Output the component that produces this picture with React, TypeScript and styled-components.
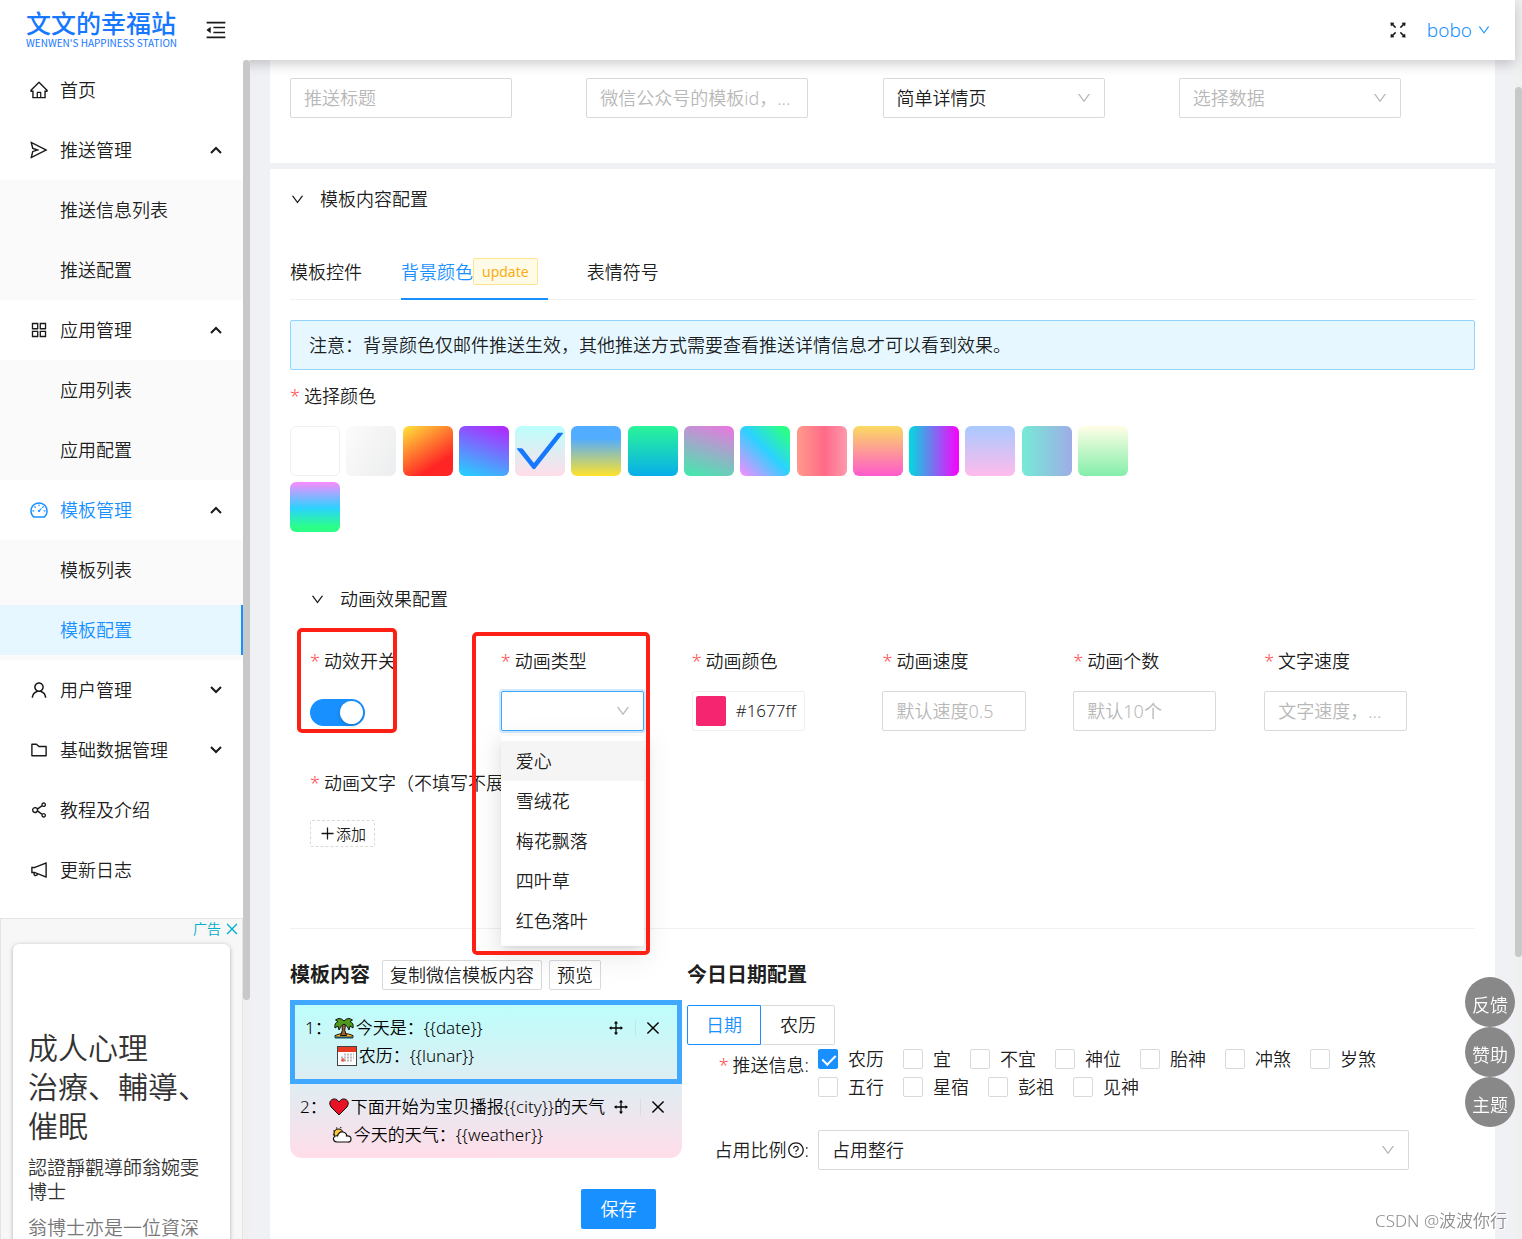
import React, { useState } from "react";
import styled, { createGlobalStyle, css } from "styled-components";
import {
  AiOutlineAppstore,
  AiOutlineCheck,
  AiOutlineClose,
  AiOutlineDashboard,
  AiOutlineDown,
  AiOutlineDrag,
  AiOutlineFolder,
  AiOutlineFullscreen,
  AiOutlineHome,
  AiOutlineMenuFold,
  AiOutlineNotification,
  AiOutlinePlus,
  AiOutlineQuestionCircle,
  AiOutlineSend,
  AiOutlineShareAlt,
  AiOutlineUser,
} from "react-icons/ai";

const blue = "#1890ff";
const textColor = "rgba(0, 0, 0, 0.9)";
const muted = "#b8b8b8";
const line = "#d9d9d9";

const GlobalStyle = createGlobalStyle`
  * { box-sizing: border-box; }
  body {
    margin: 0;
    color: ${textColor};
    font-family: "Noto Sans", "Noto Sans CJK SC", sans-serif;
    font-size: 18px;
    font-weight: 350;
    line-height: 28px;
  }
  button, input, select { font: inherit; color: inherit; }
  button { cursor: pointer; }
  ul { list-style: none; margin: 0; padding: 0; }
  svg { display: block; flex: none; }
`;

/* ---------- shell ---------- */

const Page = styled.div`
  display: flex;
  height: 100vh;
  overflow: hidden;
`;

const Frame = styled.div`
  flex: 1;
  min-width: 0;
  display: flex;
  flex-direction: column;
`;

const Body = styled.div`
  flex: 1;
  min-height: 0;
  display: flex;
`;

const Rail = styled.div<{ $rows: string }>`
  flex: none;
  width: 7px;
  display: grid;
  grid-template-rows: ${(p) => p.$rows};
  background: #f0f0f0;
`;

const Thumb = styled.div`
  grid-row: 2;
  border-radius: 4px;
  background: #c8c8c8;
`;

/* ---------- header ---------- */

const Header = styled.header`
  flex: none;
  height: 60px;
  position: relative;
  z-index: 2;
  display: flex;
  align-items: center;
  padding: 0 24px 0 26px;
  background: #fff;
  box-shadow: 0 4px 12px rgba(0, 0, 0, 0.2);
`;

const Logo = styled.a`
  display: flex;
  flex-direction: column;
  width: 150px;
  margin: 0 28px 3px 0;
  color: #1677ff;
  text-decoration: none;
  white-space: nowrap;
`;

const LogoName = styled.span`
  font-size: 25px;
  font-weight: 500;
  line-height: 28px;
`;

const LogoSub = styled.span`
  font-family: "Noto Sans CJK SC", sans-serif;
  font-size: 10px;
  font-weight: 400;
  line-height: 12px;
`;

const IconButton = styled.button<{ $size: number }>`
  display: flex;
  padding: 0;
  border: 0;
  background: none;
  font-size: ${(p) => p.$size}px;
`;

const HeaderTools = styled.div`
  display: flex;
  align-items: center;
  gap: 18px;
  margin-left: auto;
`;

const UserButton = styled.button`
  display: flex;
  align-items: center;
  gap: 5px;
  padding: 0;
  border: 0;
  background: none;
  color: ${blue};
  font-size: 19px;

  svg { font-size: 14px; }
`;

/* ---------- sidebar ---------- */

const Sidebar = styled.aside`
  flex: none;
  width: 243px;
  position: relative;
  z-index: 3;
  overflow: hidden;
  background: #fff;
`;

const SideRail = styled(Rail)`
  position: relative;
  z-index: 3;
`;

const MenuButton = styled.button<{ $active?: boolean; $open?: boolean }>`
  display: flex;
  align-items: center;
  gap: 11px;
  width: 100%;
  height: 60px;
  padding: 0 20px 0 29px;
  border: 0;
  background: none;
  text-align: left;
  color: ${(p) => (p.$active ? blue : textColor)};
`;

const Caret = styled.svg<{ $open?: boolean }>`
  width: 14px;
  height: 14px;
  margin-left: auto;
  color: ${textColor};
  transform: ${(p) => (p.$open ? "rotate(180deg)" : "none")};
`;

const SubMenu = styled.ul`
  padding: 5px 0;
  display: grid;
  gap: 10px;
  background: #fafafa;
`;

const SubLink = styled.a<{ $active?: boolean }>`
  display: flex;
  align-items: center;
  height: 50px;
  padding-left: 60px;
  color: ${textColor};
  text-decoration: none;
  ${(p) =>
    p.$active &&
    css`
      color: ${blue};
      background: #e6f7ff;
      border-right: 2px solid ${blue};
    `}
`;

const Ad = styled.section`
  margin-top: 18px;
  padding: 0 12px;
  border: 1px solid #e4e4e4;
  background: #f7f7f7;
  font-family: "Noto Sans CJK SC", sans-serif;
`;

const AdBar = styled.div`
  display: flex;
  justify-content: flex-end;
  align-items: center;
  gap: 3px;
  height: 19px;
  margin: 0 -10px 6px 0;
  color: #00aecd;
  font-size: 14px;
  line-height: 19px;
`;

const AdCard = styled.div`
  height: 400px;
  padding: 83px 14px 0 15px;
  border-radius: 6px;
  background: #fff;
  box-shadow: 0 1px 4px rgba(0, 0, 0, 0.3);
  white-space: nowrap;
`;

const AdTitle = styled.h2`
  margin: 0 0 11px;
  color: #333;
  font-size: 30px;
  font-weight: inherit;
  line-height: 39px;
`;

const AdText = styled.p<{ $soft?: boolean }>`
  margin: 0 0 12px;
  color: ${(p) => (p.$soft ? "#777" : "#333")};
  font-size: 19px;
  line-height: 24px;
`;

/* ---------- main area ---------- */

const Main = styled.main`
  flex: 1;
  min-width: 0;
  overflow: hidden;
  padding: 0 20px;
  background: #f0f1f5;
`;

const Card = styled.section`
  padding: 0 20px;
  background: #fff;

  & + & {
    margin-top: 6px;
    padding-bottom: 40px;
  }
`;

const FormGrid = styled.div<{ $columns: number }>`
  display: grid;
  grid-template-columns: repeat(${(p) => p.$columns}, minmax(0, 1fr));
`;

const SearchGrid = styled(FormGrid)`
  padding: 18px 0 45px;
`;

const boxed = css`
  width: 75%;
  height: 40px;
  padding: 0 13px;
  border: 1px solid ${line};
  border-radius: 2px;
  background: #fff;
  outline: none;
`;

const TextInput = styled.input`
  ${boxed}
  text-overflow: ellipsis;

  &::placeholder { color: ${muted}; opacity: 1; }
`;

const SelectWrap = styled.div<{ $full?: boolean }>`
  position: relative;
  width: ${(p) => (p.$full ? "100%" : "75%")};

  > svg {
    position: absolute;
    right: 13px;
    top: 12px;
    color: ${muted};
    font-size: 16px;
    pointer-events: none;
  }
`;

const SelectBox = styled.select<{ $empty?: boolean; $focused?: boolean }>`
  ${boxed}
  display: block;
  width: 100%;
  appearance: none;
  color: ${(p) => (p.$empty ? muted : textColor)};
  ${(p) =>
    p.$focused &&
    css`
      border-color: #40a9ff;
      box-shadow: 0 0 0 2px rgba(24, 144, 255, 0.2);
    `}
`;

const CollapseHead = styled.button`
  display: flex;
  align-items: center;
  gap: 15px;
  height: 60px;
  padding: 0;
  border: 0;
  background: none;

  svg { font-size: 15px; }
`;

const Tabs = styled.div`
  display: flex;
  gap: 39px;
  height: 51px;
  margin: 20px 0;
  border-bottom: 1px solid #f0f0f0;
`;

const Tab = styled.button<{ $active?: boolean }>`
  display: flex;
  align-items: center;
  height: 51px;
  padding: 0 0 4px;
  border: 0;
  border-bottom: 2px solid ${(p) => (p.$active ? blue : "transparent")};
  background: none;
  color: ${(p) => (p.$active ? blue : textColor)};
`;

const Tag = styled.span`
  height: 27px;
  margin-right: 10px;
  padding: 0 8px;
  border: 1px solid #ffe58f;
  border-radius: 2px;
  background: #fffbe6;
  color: #faad14;
  font-size: 14px;
  font-weight: 400;
  line-height: 25px;
`;

const Alert = styled.div`
  padding: 10px 18px;
  border: 1px solid #91d5ff;
  border-radius: 2px;
  background: #e6f7ff;
`;

const Label = styled.label<{ $required?: boolean }>`
  display: block;
  white-space: nowrap;
  ${(p) =>
    p.$required &&
    css`
      &::before {
        content: "*";
        margin-right: 4px;
        color: #ff4d4f;
      }
    `}
`;

const Palette = styled.div`
  display: grid;
  grid-template-columns: repeat(15, 50px);
  justify-content: space-between;
  row-gap: 6px;
  max-width: 838px;
  margin: 16px 0 37px;
`;

const PaletteLabel = styled.div`
  margin-top: 12px;
`;

const Swatch = styled.button<{ $fill: string; $outlined?: boolean }>`
  display: grid;
  place-content: center;
  height: 50px;
  padding: 0;
  border: ${(p) => (p.$outlined ? "1px solid #f0f0f0" : "0")};
  border-radius: 6px;
  background: ${(p) => p.$fill};
  color: #1677ff;
  font-size: 58px;
`;

const Animation = styled.div`
  padding: 0 20px 81px;
  border-bottom: 1px solid #f0f0f0;
`;

const Field = styled.div`
  position: relative;
  padding-top: 18px;
  display: flex;
  flex-direction: column;
  align-items: flex-start;
  gap: 16px;
`;

const WideField = styled(Field)`
  padding-top: 38px;
  gap: 23px;
`;

const Highlight = styled.div<{ $box: string }>`
  position: absolute;
  inset: ${(p) => p.$box};
  z-index: 6;
  border: 4px solid #ff2015;
  border-radius: 5px;
  pointer-events: none;
`;

const Switch = styled.input`
  appearance: none;
  width: 55px;
  height: 27px;
  margin: 8px 0 0;
  padding: 2px;
  border-radius: 14px;
  background: ${muted};

  &::after {
    content: "";
    display: block;
    width: 23px;
    height: 23px;
    border-radius: 50%;
    background: #fff;
    box-shadow: 0 2px 4px rgba(0, 35, 11, 0.2);
  }
  &:checked { background: ${blue}; }
  &:checked::after { margin-left: auto; }
`;

const Dropdown = styled.ul`
  position: absolute;
  top: 45px;
  left: 0;
  right: 0;
  z-index: 5;
  padding: 5px 0;
  border-radius: 2px;
  background: #fff;
  box-shadow: 0 3px 6px -4px rgba(0, 0, 0, 0.12), 0 6px 16px rgba(0, 0, 0, 0.08),
    0 9px 28px 8px rgba(0, 0, 0, 0.05);
`;

const Option = styled.li<{ $active?: boolean }>`
  height: 40px;
  padding: 0 15px;
  line-height: 40px;
  background: ${(p) => (p.$active ? "#f5f5f5" : "transparent")};
`;

const ColorButton = styled.button`
  display: flex;
  align-items: center;
  gap: 10px;
  height: 40px;
  padding: 0 8px 0 3px;
  border: 1px solid #f0f0f0;
  border-radius: 2px;
  background: #fff;
  font-size: 17px;
`;

const ColorChip = styled.span`
  width: 30px;
  height: 30px;
  border-radius: 2px;
  background: #f5256f;
`;

const AddButton = styled.button`
  display: flex;
  align-items: center;
  height: 27px;
  padding: 0 8px;
  border: 1px dashed ${line};
  border-radius: 2px;
  background: #fff;
  font-size: 15px;
`;

/* ---------- template editor ---------- */

const Editor = styled.div`
  display: flex;
  gap: 5px;
  padding-top: 31px;
`;

const EditorLeft = styled.div`
  flex: 0 0 392px;
`;

const EditorRight = styled.div`
  flex: 1;
  min-width: 0;
  padding-right: 66px;
`;

const TitleRow = styled.div`
  display: flex;
  align-items: center;
  gap: 7px;
  height: 30px;
`;

const Title = styled.h3`
  margin: 0 5px 0 0;
  font-size: 20px;
  font-weight: 700;
`;

const SmallButton = styled.button`
  height: 30px;
  padding: 0 7px;
  border: 1px solid ${line};
  border-radius: 2px;
  background: #fff;
  line-height: 28px;
`;

const TemplateList = styled.ol`
  margin: 10px 0 31px;
  padding: 0;
  list-style: none;
  border-radius: 0 0 12px 12px;
  background: linear-gradient(180deg, #bbfffc, #ffdde9);
  color: #000;
  font-size: 17px;
`;

const TemplateItem = styled.li<{ $active?: boolean }>`
  display: flex;
  gap: 2px;
  padding: 9px 15px 9px 10px;
  border: ${(p) => (p.$active ? "5px solid #40a9ff" : "0")};
`;

const Lines = styled.div`
  flex: 1;
  min-width: 0;
  white-space: nowrap;
`;

const TextLine = styled.div`
  display: flex;
  align-items: center;
  gap: 2px;
  & + & { padding-left: 3px; }
`;

const ItemTools = styled.div`
  display: flex;
  align-items: center;
  gap: 8px;
  height: 28px;
`;

const Separator = styled.span`
  width: 1px;
  height: 16px;
  margin-left: 2px;
  background: rgba(0, 0, 0, 0.06);
`;

const SaveRow = styled.div`
  padding-left: 291px;
`;

const SaveButton = styled.button`
  width: 75px;
  height: 40px;
  padding: 0;
  border: 0;
  border-radius: 2px;
  background: ${blue};
  color: #fff;
`;

const Segments = styled.div`
  display: flex;
  margin-top: 15px;
`;

const Segment = styled.button<{ $active?: boolean }>`
  width: 74px;
  height: 40px;
  padding: 0;
  border: 1px solid ${(p) => (p.$active ? blue : line)};
  border-left-color: ${(p) => (p.$active ? blue : "transparent")};
  border-radius: ${(p) => (p.$active ? "2px 0 0 2px" : "0 2px 2px 0")};
  background: #fff;
  color: ${(p) => (p.$active ? blue : textColor)};
`;

const FormRow = styled.div<{ $gap: number }>`
  display: grid;
  grid-template-columns: 122px minmax(0, 1fr);
  column-gap: 9px;
  margin-bottom: ${(p) => p.$gap}px;
`;

const RowLabel = styled(Label)`
  display: flex;
  justify-content: flex-end;
  align-items: center;
  height: 40px;
`;

const Checks = styled.div`
  display: flex;
  flex-wrap: wrap;
  column-gap: 19px;
  align-content: flex-start;
`;

const CheckLabel = styled.label`
  display: flex;
  align-items: center;
  gap: 10px;
`;

const CheckBox = styled.input`
  appearance: none;
  position: relative;
  width: 20px;
  height: 20px;
  margin: 0;
  border: 1px solid ${line};
  border-radius: 2px;
  background: #fff;

  &:checked {
    border-color: ${blue};
    background: ${blue};
  }
  &:checked::after {
    content: "";
    position: absolute;
    left: 6px;
    top: 2px;
    width: 6px;
    height: 11px;
    border: solid #fff;
    border-width: 0 2px 2px 0;
    transform: rotate(45deg);
  }
`;

/* ---------- floating parts ---------- */

const FloatStack = styled.div`
  position: fixed;
  right: 7px;
  bottom: 112px;
  z-index: 8;
`;

const FloatButton = styled.button`
  display: block;
  width: 50px;
  height: 50px;
  padding: 6px 0 0;
  border: 0;
  border-radius: 50%;
  background: #888;
  color: #fff;
`;

const Watermark = styled.div`
  position: fixed;
  right: 15px;
  bottom: 4px;
  z-index: 8;
  color: #8c8c8c;
  font-size: 17px;
  text-shadow: 1px 1px 0 #fff;
`;

/* ---------- drawings ---------- */

const Palm = () => (
  <svg width="20" height="22" viewBox="0 0 20 22" stroke="#111" strokeWidth="1" strokeLinejoin="round">
    <path d="M1 18.500q9-4 18 0v2H1z" fill="#ffb321" />
    <path d="M8 7.500h3.500q-2 6 1 11h-6q3-5 1.500-11z" fill="#a5632a" />
    <path d="M10 4Q6-.5 1.500 3L4 4.500Q0 6 1 11l3-2 1 4q1-4 5-6 4 2 5 6l1-4 3 2q1-5-3-6.500L18.500 3Q14-.5 10 4z" fill="#4f9a1e" />
    <path d="M1 20.500h18" stroke="#1d4f63" strokeWidth="2" />
  </svg>
);

const Calendar = () => (
  <svg width="20" height="20" viewBox="0 0 20 20">
    <rect x=".5" y=".5" width="19" height="19" fill="#fff" stroke="#444" />
    <rect x="1" y="1" width="18" height="5" fill="#e83b22" />
    <path d="M7 8.500h10M4 11.500h13M4 14.500h11" stroke="#bbb" strokeWidth="2" strokeDasharray="2 1" />
    <path d="M4 14h4M6 12v4" stroke="#e83b22" />
  </svg>
);

const Heart = () => (
  <svg width="20" height="18" viewBox="0 0 20 18">
    <path d="M10 17L2 9Q-1 4 3 1.500 7-.5 10 4 13-.5 17 1.500 21 4 18 9z" fill="#e81224" stroke="#111" strokeWidth="1" />
  </svg>
);

const Cloud = () => (
  <svg width="20" height="18" viewBox="0 0 20 18" stroke="#111" strokeWidth="1.200">
    <circle cx="6.500" cy="7.500" r="4.500" fill="#ffc83d" />
    <path d="M1 9l1-.5M1.500 4.500l1 .7M4.500 1.500l.5 1M9 1l-.4 1" />
    <path d="M5 16Q1 15.500 1.500 12 3 9 5.500 10 7 5 11 6t3.500 4Q19 9.500 19 13t-3.500 3z" fill="#fff" />
  </svg>
);

const MenuCaret = ({ open }: { open: boolean }) => (
  <Caret $open={open} viewBox="0 0 14 14" fill="none" stroke="currentColor" strokeWidth="2">
    <path d="M2 4l5 5 5-5" />
  </Caret>
);

/* ---------- data ---------- */

const menu = [
  { name: "首页", icon: AiOutlineHome },
  { name: "推送管理", icon: AiOutlineSend, open: true, items: ["推送信息列表", "推送配置"] },
  { name: "应用管理", icon: AiOutlineAppstore, open: true, items: ["应用列表", "应用配置"] },
  { name: "模板管理", icon: AiOutlineDashboard, open: true, active: true, items: ["模板列表", "模板配置"] },
  { name: "用户管理", icon: AiOutlineUser, open: false, items: [] },
  { name: "基础数据管理", icon: AiOutlineFolder, open: false, items: [] },
  { name: "教程及介绍", icon: AiOutlineShareAlt },
  { name: "更新日志", icon: AiOutlineNotification },
];

const fills = [
  "#fff",
  "linear-gradient(120deg, #fdfbfb, #ebedee)",
  "linear-gradient(147deg, #ffe53b 0%, #ff2525 74%)",
  "linear-gradient(19deg, #21d4fd, #b721ff)",
  "linear-gradient(180deg, #bbfffc, #ffdde9)",
  "linear-gradient(180deg, #52acff 25%, #ffe32c)",
  "linear-gradient(0deg, #08aeea, #2af598)",
  "linear-gradient(19deg, #3eecac, #ee74e1)",
  "linear-gradient(225deg, #2bff88 10%, #2bd2ff 48%, #fa8bff)",
  "linear-gradient(90deg, #ff9a8b, #ff6a88 55%, #ff99ac)",
  "linear-gradient(0deg, #ff5acd, #fbda61)",
  "linear-gradient(90deg, #00dbde, #fc00ff)",
  "linear-gradient(180deg, #a9c9ff, #ffbbec)",
  "linear-gradient(90deg, #74ebd5, #9face6)",
  "linear-gradient(180deg, #fffee6, #84eeaa)",
  "linear-gradient(0deg, #2bff88 10%, #2bd2ff 48%, #fa8bff)",
];

const effects = ["爱心", "雪绒花", "梅花飘落", "四叶草", "红色落叶"];

const infos = ["农历", "宜", "不宜", "神位", "胎神", "冲煞", "岁煞", "五行", "星宿", "彭祖", "见神"];

const Tools = () => (
  <ItemTools>
    <IconButton $size={18} aria-label="移动">
      <AiOutlineDrag />
    </IconButton>
    <Separator />
    <IconButton $size={18} aria-label="删除">
      <AiOutlineClose />
    </IconButton>
  </ItemTools>
);

export default function App() {
  const [fill, setFill] = useState(4);

  return (
    <Page>
      <GlobalStyle />
      <Frame>
        <Header>
          <Logo href="#">
            <LogoName>文文的幸福站</LogoName>
            <LogoSub>WENWEN'S HAPPINESS STATION</LogoSub>
          </Logo>
          <IconButton $size={24} aria-label="收起菜单">
            <AiOutlineMenuFold />
          </IconButton>
          <HeaderTools>
            <IconButton $size={22} aria-label="全屏">
              <AiOutlineFullscreen />
            </IconButton>
            <UserButton>
              bobo
              <AiOutlineDown />
            </UserButton>
          </HeaderTools>
        </Header>

        <Body>
          <Sidebar>
            <nav>
              <ul>
                {menu.map(({ name, icon: Icon, open, active, items }) => (
                  <li key={name}>
                    <MenuButton $active={active}>
                      <Icon size={20} />
                      {name}
                      {items && <MenuCaret open={!!open} />}
                    </MenuButton>
                    {items && items.length > 0 && (
                      <SubMenu>
                        {items.map((item) => (
                          <li key={item}>
                            <SubLink href="#" $active={item === "模板配置"}>
                              {item}
                            </SubLink>
                          </li>
                        ))}
                      </SubMenu>
                    )}
                  </li>
                ))}
              </ul>
            </nav>
            <Ad>
              <AdBar>
                广告
                <AiOutlineClose size={16} />
              </AdBar>
              <AdCard>
                <AdTitle>
                  成人心理
                  <br />
                  治療、輔導、
                  <br />
                  催眠
                </AdTitle>
                <AdText>
                  認證靜觀導師翁婉雯
                  <br />
                  博士
                </AdText>
                <AdText $soft>翁博士亦是一位資深</AdText>
              </AdCard>
            </Ad>
          </Sidebar>
          <SideRail $rows="0 940fr 239fr">
            <Thumb />
          </SideRail>

          <Main>
            <Card>
              <SearchGrid $columns={4}>
                <TextInput aria-label="推送标题" placeholder="推送标题" />
                <TextInput aria-label="模板id" placeholder="微信公众号的模板id，..." />
                <SelectWrap>
                  <SelectBox aria-label="详情页">
                    <option>简单详情页</option>
                  </SelectBox>
                  <AiOutlineDown />
                </SelectWrap>
                <SelectWrap>
                  <SelectBox aria-label="数据" $empty>
                    <option>选择数据</option>
                  </SelectBox>
                  <AiOutlineDown />
                </SelectWrap>
              </SearchGrid>
            </Card>

            <Card>
              <CollapseHead>
                <AiOutlineDown />
                模板内容配置
              </CollapseHead>
              <Tabs role="tablist">
                <Tab role="tab">模板控件</Tab>
                <Tab role="tab" $active aria-selected>
                  背景颜色<Tag>update</Tag>
                </Tab>
                <Tab role="tab">表情符号</Tab>
              </Tabs>
              <Alert>注意：背景颜色仅邮件推送生效，其他推送方式需要查看推送详情信息才可以看到效果。</Alert>
              <PaletteLabel>
                <Label as="span" $required>
                  选择颜色
                </Label>
              </PaletteLabel>
              <Palette>
                {fills.map((f, i) => (
                  <Swatch
                    key={f}
                    $fill={f}
                    $outlined={i === 0}
                    aria-label={`颜色${i + 1}`}
                    aria-pressed={fill === i}
                    onClick={() => setFill(i)}
                  >
                    {fill === i && <AiOutlineCheck />}
                  </Swatch>
                ))}
              </Palette>

              <Animation>
                <CollapseHead>
                  <AiOutlineDown />
                  动画效果配置
                </CollapseHead>
                <FormGrid $columns={6}>
                  <Field>
                    <Label htmlFor="effect-on" $required>
                      动效开关
                    </Label>
                    <Switch id="effect-on" type="checkbox" role="switch" defaultChecked />
                    <Highlight $box="-1px 104px -2px -13px" />
                  </Field>
                  <Field>
                    <Label htmlFor="effect-type" $required>
                      动画类型
                    </Label>
                    <SelectWrap>
                      <SelectBox id="effect-type" defaultValue="" $focused>
                        <option value="" />
                        {effects.map((e) => (
                          <option key={e}>{e}</option>
                        ))}
                      </SelectBox>
                      <AiOutlineDown />
                      <Dropdown role="listbox">
                        {effects.map((e, i) => (
                          <Option key={e} role="option" $active={i === 0}>
                            {e}
                          </Option>
                        ))}
                      </Dropdown>
                    </SelectWrap>
                    <Highlight $box="3px 42px -224px -29px" />
                  </Field>
                  <Field>
                    <Label htmlFor="effect-color" $required>
                      动画颜色
                    </Label>
                    <ColorButton id="effect-color">
                      <ColorChip />
                      #1677ff
                    </ColorButton>
                  </Field>
                  <Field>
                    <Label htmlFor="effect-speed" $required>
                      动画速度
                    </Label>
                    <TextInput id="effect-speed" placeholder="默认速度0.5" />
                  </Field>
                  <Field>
                    <Label htmlFor="effect-count" $required>
                      动画个数
                    </Label>
                    <TextInput id="effect-count" placeholder="默认10个" />
                  </Field>
                  <Field>
                    <Label htmlFor="text-speed" $required>
                      文字速度
                    </Label>
                    <TextInput id="text-speed" placeholder="文字速度，..." />
                  </Field>
                  <WideField>
                    <Label htmlFor="add-text" $required>
                      动画文字（不填写不展示）
                    </Label>
                    <AddButton id="add-text">
                      <AiOutlinePlus size={17} />
                      添加
                    </AddButton>
                  </WideField>
                </FormGrid>
              </Animation>

              <Editor>
                <EditorLeft>
                  <TitleRow>
                    <Title>模板内容</Title>
                    <SmallButton>复制微信模板内容</SmallButton>
                    <SmallButton>预览</SmallButton>
                  </TitleRow>
                  <TemplateList>
                    <TemplateItem $active>
                      <span>1：</span>
                      <Lines>
                        <TextLine>
                          <Palm />
                          今天是：{"{{date}}"}
                        </TextLine>
                        <TextLine>
                          <Calendar />
                          农历：{"{{lunar}}"}
                        </TextLine>
                      </Lines>
                      <Tools />
                    </TemplateItem>
                    <TemplateItem>
                      <span>2：</span>
                      <Lines>
                        <TextLine>
                          <Heart />
                          下面开始为宝贝播报{"{{city}}"}的天气
                        </TextLine>
                        <TextLine>
                          <Cloud />
                          今天的天气：{"{{weather}}"}
                        </TextLine>
                      </Lines>
                      <Tools />
                    </TemplateItem>
                  </TemplateList>
                  <SaveRow>
                    <SaveButton>保存</SaveButton>
                  </SaveRow>
                </EditorLeft>

                <EditorRight>
                  <TitleRow>
                    <Title>今日日期配置</Title>
                  </TitleRow>
                  <Segments>
                    <Segment $active>日期</Segment>
                    <Segment>农历</Segment>
                  </Segments>
                  <FormRow $gap={29}>
                    <RowLabel as="span" $required>
                      推送信息:
                    </RowLabel>
                    <Checks>
                      {infos.map((name, i) => (
                        <CheckLabel key={name}>
                          <CheckBox type="checkbox" defaultChecked={i === 0} />
                          {name}
                        </CheckLabel>
                      ))}
                    </Checks>
                  </FormRow>
                  <FormRow $gap={0}>
                    <RowLabel htmlFor="ratio">
                      占用比例
                      <AiOutlineQuestionCircle />:
                    </RowLabel>
                    <SelectWrap $full>
                      <SelectBox id="ratio">
                        <option>占用整行</option>
                      </SelectBox>
                      <AiOutlineDown />
                    </SelectWrap>
                  </FormRow>
                </EditorRight>
              </Editor>
            </Card>
          </Main>
        </Body>
      </Frame>
      <Rail $rows="87fr 870fr 282fr">
        <Thumb />
      </Rail>

      <FloatStack>
        <FloatButton>反馈</FloatButton>
        <FloatButton>赞助</FloatButton>
        <FloatButton>主题</FloatButton>
      </FloatStack>
      <Watermark>CSDN @波波你行</Watermark>
    </Page>
  );
}
